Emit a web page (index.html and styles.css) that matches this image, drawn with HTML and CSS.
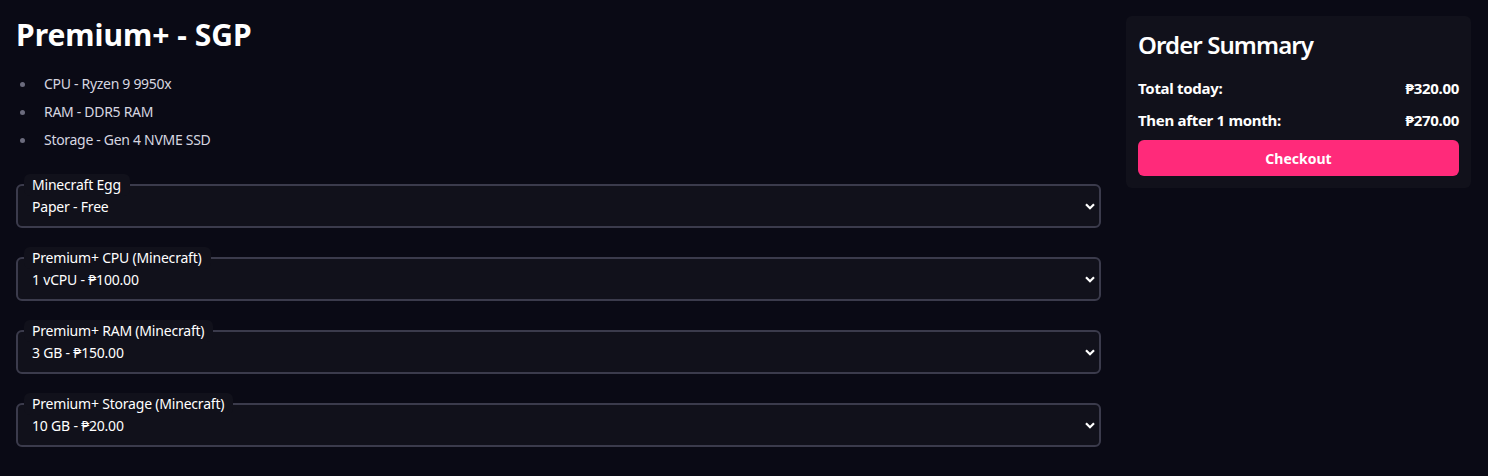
FILE: index.html
```html
<!DOCTYPE html>
<html lang="en">
<head>
<meta charset="utf-8">
<title>Premium+ - SGP</title>
<link rel="stylesheet" href="styles.css">
</head>
<body>
<div class="page">
  <main class="main">
    <h1 class="title">Premium+ - SGP</h1>
    <ul class="specs">
      <li>CPU - Ryzen 9 9950x</li>
      <li>RAM - DDR5 RAM</li>
      <li>Storage - Gen 4 NVME SSD</li>
    </ul>
    <div class="fields">
      <fieldset class="field">
        <legend class="field-label">Minecraft Egg</legend>
        <div class="select"><span>Paper - Free</span><svg class="chev" width="10" height="7" viewBox="0 0 10 7"><path d="M1 1.2 L5 5.2 L9 1.2" fill="none" stroke="#fff" stroke-width="2.2"/></svg></div>
      </fieldset>
      <fieldset class="field">
        <legend class="field-label">Premium+ CPU (Minecraft)</legend>
        <div class="select"><span>1 vCPU - ₱100.00</span><svg class="chev" width="10" height="7" viewBox="0 0 10 7"><path d="M1 1.2 L5 5.2 L9 1.2" fill="none" stroke="#fff" stroke-width="2.2"/></svg></div>
      </fieldset>
      <fieldset class="field">
        <legend class="field-label">Premium+ RAM (Minecraft)</legend>
        <div class="select"><span>3 GB - ₱150.00</span><svg class="chev" width="10" height="7" viewBox="0 0 10 7"><path d="M1 1.2 L5 5.2 L9 1.2" fill="none" stroke="#fff" stroke-width="2.2"/></svg></div>
      </fieldset>
      <fieldset class="field">
        <legend class="field-label">Premium+ Storage (Minecraft)</legend>
        <div class="select"><span>10 GB - ₱20.00</span><svg class="chev" width="10" height="7" viewBox="0 0 10 7"><path d="M1 1.2 L5 5.2 L9 1.2" fill="none" stroke="#fff" stroke-width="2.2"/></svg></div>
      </fieldset>
    </div>
  </main>
  <aside class="summary">
    <h2 class="summary-title">Order Summary</h2>
    <div class="row"><span>Total today:</span><span>₱320.00</span></div>
    <div class="row"><span>Then after 1 month:</span><span>₱270.00</span></div>
    <button class="checkout">Checkout</button>
  </aside>
</div>
</body>
</html>
```
FILE: styles.css
```css
* { box-sizing: border-box; }
html, body { margin: 0; }
body {
  background: #0a0a15;
  color: #ffffff;
  font-family: "Noto Sans", "Open Sans", sans-serif;
  font-size: 14px;
}
.page {
  display: grid;
  grid-template-columns: 1fr 345px;
  gap: 25px;
  padding: 16px 17px 16px 16px;
  align-items: start;
}
.title {
  margin: 0;
  font-size: 30px;
  line-height: 38px;
  font-weight: 700;
}
.specs {
  list-style: none;
  margin: 16px 0 0;
  padding: 0;
}
.specs li {
  position: relative;
  padding-left: 28px;
  line-height: 28px;
  color: #d6d6e0;
  letter-spacing: -0.3px;
}
.specs li::before {
  content: "";
  position: absolute;
  left: 4px;
  top: 12px;
  width: 5px;
  height: 5px;
  border-radius: 50%;
  background: #6b6b7d;
}
.fields {
  display: flex;
  flex-direction: column;
  gap: 19px;
  margin-top: 20px;
}
.field {
  margin: 0;
  padding: 0;
  border: 2px solid #3b3b4c;
  border-radius: 6px;
  background: #11111b;
  min-width: 0;
}
.field-label {
  margin-left: 6px;
  padding: 2px 9px 2px 8px;
  background: #11111b;
  border-radius: 6px;
  font-size: 14px;
  line-height: 18px;
  color: #ffffff;
  letter-spacing: -0.2px;
}
.select {
  display: flex;
  align-items: flex-start;
  justify-content: space-between;
  height: 30px;
  padding: 0 4px 0 14px;
  line-height: 22px;
  color: #ffffff;
  letter-spacing: -0.2px;
}
.chev { margin-top: 7px; }
.summary {
  background: #11111b;
  border-radius: 6px;
  padding: 12px;
}
.summary-title {
  margin: 0 0 10px;
  font-size: 24px;
  line-height: 34px;
  font-weight: 600;
  letter-spacing: -0.9px;
}
.row {
  display: flex;
  justify-content: space-between;
  font-weight: 700;
  font-size: 15px;
  line-height: 32px;
  letter-spacing: -0.3px;
}
.checkout {
  display: block;
  width: 100%;
  height: 36px;
  margin-top: 4px;
  border: 0;
  border-radius: 6px;
  background: #ff2a7a;
  color: #ffffff;
  font-family: inherit;
  font-size: 14px;
  font-weight: 700;
}
```
